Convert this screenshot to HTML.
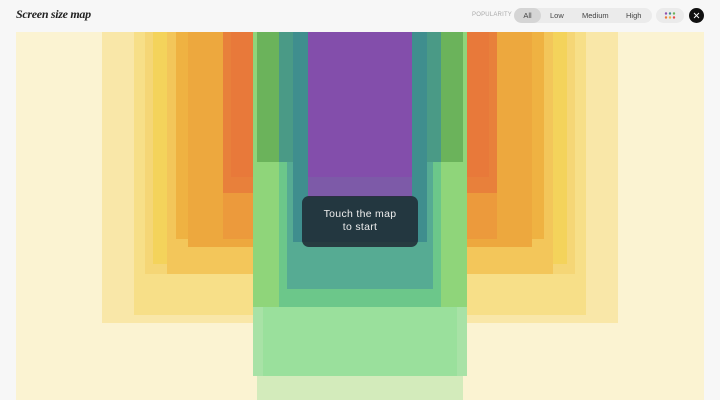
<!DOCTYPE html>
<html><head><meta charset="utf-8"><style>
body{margin:0;width:720px;height:400px;background:#f7f7f7;overflow:hidden;font-family:"Liberation Sans",sans-serif;position:relative}
.map{position:absolute;left:16px;top:32px;width:688px;height:368px;background:#fbf3d2;overflow:hidden}
.r{position:absolute;top:0}
.t{position:absolute;left:16px;top:7px;font-family:"Liberation Serif",serif;font-style:italic;font-weight:bold;font-size:12px;letter-spacing:-0.3px;color:#222}
</style></head><body>
<div class="t">Screen size map</div>
<div style="position:absolute;left:472px;top:12px;font-size:6px;color:#aaa;letter-spacing:.2px">POPULARITY</div>
<div style="position:absolute;left:514px;top:8px;width:138px;height:15px;background:#ebebeb;border-radius:8px;font-size:7.5px;color:#444">
<div style="position:absolute;left:0;top:0;width:27px;height:15px;background:#d5d5d5;border-radius:8px;text-align:center;line-height:15px">All</div>
<span style="position:absolute;left:36px;top:3px">Low</span>
<span style="position:absolute;left:68px;top:3px">Medium</span>
<span style="position:absolute;left:112px;top:3px">High</span>
</div>
<div style="position:absolute;left:656px;top:8px;width:28px;height:15px;background:#ebebeb;border-radius:8px">
<svg width="28" height="15"><g>
<circle cx="10" cy="5.5" r="1.2" fill="#8e4fb0"/><circle cx="14" cy="5.5" r="1.2" fill="#3f8e8e"/><circle cx="18" cy="5.5" r="1.2" fill="#6bb35b"/>
<circle cx="10" cy="9.5" r="1.2" fill="#e8793a"/><circle cx="14" cy="9.5" r="1.2" fill="#efb242"/><circle cx="18" cy="9.5" r="1.2" fill="#e94b4b"/></g></svg></div>
<div style="position:absolute;left:689px;top:8px;width:15px;height:15px;background:#111;border-radius:50%">
<svg width="15" height="15"><path d="M5 5L10 10M10 5L5 10" stroke="#fff" stroke-width="0.9"/></svg></div>
<div class="map">
<div class="r" style="left:86px;width:516px;height:291px;background:#f9e7a8"></div>
<div class="r" style="left:118px;width:452px;height:283px;background:#f7df88"></div>
<div class="r" style="left:129px;width:430px;height:242px;background:#f5d676"></div>
<div class="r" style="left:137px;width:414px;height:232px;background:#f4d35b"></div>
<div class="r" style="left:151px;width:386px;height:242px;background:#f3c65a"></div>
<div class="r" style="left:160px;width:368px;height:207px;background:#efb242"></div>
<div class="r" style="left:172px;width:344px;height:215px;background:#eda83e"></div>
<div class="r" style="left:207px;width:274px;height:207px;background:#ec9a3c"></div>
<div class="r" style="left:207px;width:274px;height:161px;background:#e8803b"></div>
<div class="r" style="left:215px;width:258px;height:145px;background:#e8793a"></div>
<div class="r" style="left:241px;width:206px;height:368px;background:#d3ebbb"></div>
<div class="r" style="left:237px;width:214px;height:344px;background:#a8e2a6"></div>
<div class="r" style="left:247px;width:194px;height:344px;background:#9ae09c"></div>
<div class="r" style="left:237px;width:214px;height:275px;background:#8fd57a"></div>
<div class="r" style="left:241px;width:206px;height:130px;background:#6bb35b"></div>
<div class="r" style="left:263px;width:162px;height:275px;background:#6cc78a"></div>
<div class="r" style="left:271px;width:146px;height:257px;background:#56ab93"></div>
<div class="r" style="left:263px;width:162px;height:130px;background:#4a9a86"></div>
<div class="r" style="left:277px;width:134px;height:210px;background:#3f8e8e"></div>
<div class="r" style="left:292px;width:104px;height:165px;background:#7d5aa8"></div>
<div class="r" style="left:292px;width:104px;height:145px;background:#834eab"></div>
<div style="position:absolute;left:286px;top:164px;width:116px;height:51px;border-radius:7px;background:rgba(30,40,50,.85);color:#eee;font-size:10.5px;text-align:center;line-height:13px;padding-top:12px;box-sizing:border-box;letter-spacing:.3px">Touch the map<br>to start</div>
</div>
</body></html>
